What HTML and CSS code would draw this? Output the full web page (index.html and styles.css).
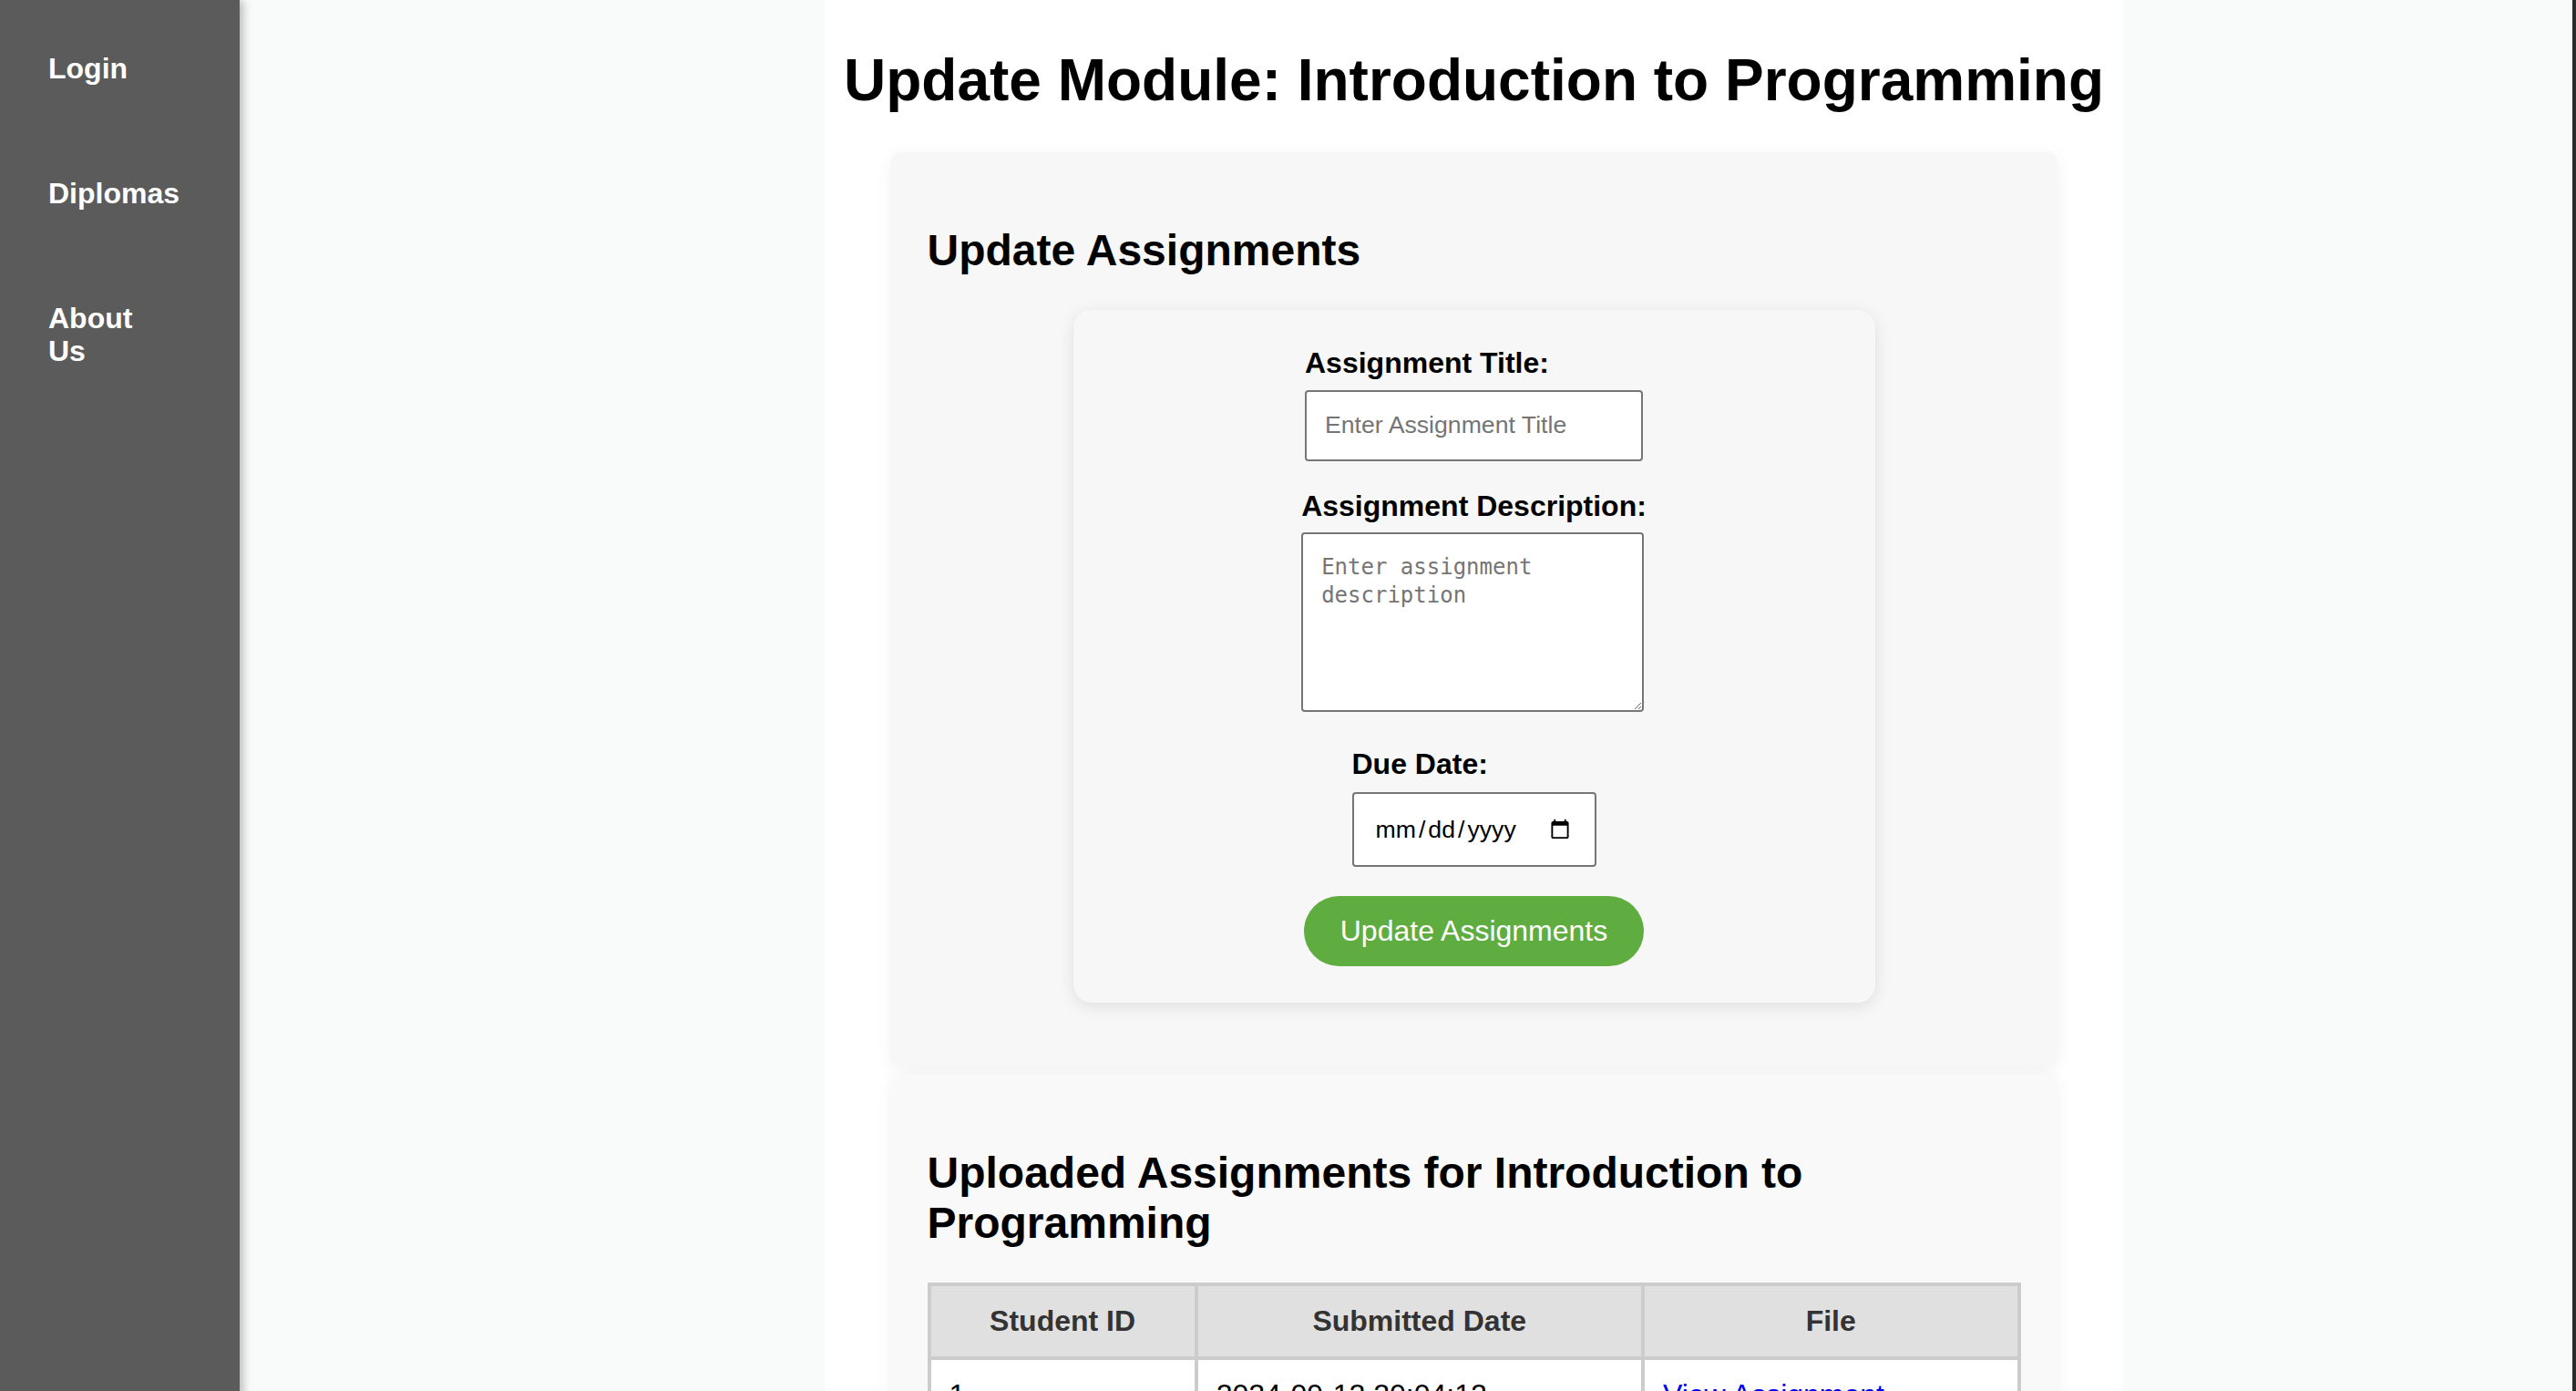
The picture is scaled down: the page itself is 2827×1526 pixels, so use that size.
FILE: index.html
```html
<!DOCTYPE html>
<html lang="en">
<head>
<meta charset="utf-8">
<title>Update Module: Introduction to Programming</title>
<link rel="stylesheet" href="styles.css">
</head>
<body>
  <nav class="sidebar">
    <a class="nav-link" href="#">Login</a>
    <a class="nav-link" href="#">Diplomas</a>
    <a class="nav-link" href="#">About Us</a>
  </nav>
  <main class="main">
    <div class="container">
      <h1 class="page-title">Update Module: Introduction to Programming</h1>

      <section class="card card-update">
        <h2 class="card-title">Update Assignments</h2>
        <form class="form-card">
          <div class="form-group">
            <label class="form-label" for="title">Assignment Title:</label>
            <input class="text-input" id="title" type="text" placeholder="Enter Assignment Title">
          </div>
          <div class="form-group form-group-desc">
            <label class="form-label" for="desc">Assignment Description:</label>
            <textarea class="text-area" id="desc" placeholder="Enter assignment description"></textarea>
          </div>
          <div class="form-group">
            <label class="form-label" for="due">Due Date:</label>
            <input class="date-input" id="due" type="date">
          </div>
          <button class="btn-submit" type="button">Update Assignments</button>
        </form>
      </section>

      <section class="card card-uploaded">
        <h2 class="card-title">Uploaded Assignments for Introduction to Programming</h2>
        <table class="uploads">
          <thead>
            <tr><th>Student ID</th><th>Submitted Date</th><th>File</th></tr>
          </thead>
          <tbody>
            <tr><td>1</td><td>2024-09-12 20:04:12</td><td><a class="file-link" href="#">View Assignment</a></td></tr>
            <tr><td>2</td><td>2024-09-13 10:15:47</td><td><a class="file-link" href="#">View Assignment</a></td></tr>
          </tbody>
        </table>
      </section>
    </div>
  </main>
  <div class="edge"></div>
</body>
</html>
```

FILE: styles.css
```css
* { box-sizing: border-box; }

html, body {
  margin: 0;
  padding: 0;
}

body {
  display: flex;
  min-height: 100vh;
  background: #f9fbfb;
  font-family: "Liberation Sans", Arial, sans-serif;
  color: #000;
}

/* Sidebar */
.sidebar {
  width: 263px;
  flex: 0 0 263px;
  background: #5b5b5b;
  padding-top: 7px;
  display: flex;
  flex-direction: column;
  align-items: flex-start;
  box-shadow: 3px 0 10px rgba(0, 0, 0, 0.3);
  position: relative;
  z-index: 2;
}

.nav-link {
  display: block;
  width: 100px;
  margin-left: 53px;
  padding: 50px 0;
  color: #fff;
  font-weight: bold;
  font-size: 32px;
  line-height: 36.8px;
  text-decoration: none;
  white-space: normal;
}

/* Main */
.main {
  flex: 1;
  display: flex;
  justify-content: center;
  padding-left: 149px;
}

.container {
  width: 1425px;
  background: #fff;
  min-height: 100vh;
  padding-bottom: 40px;
}

.page-title {
  margin: 52px 0 41px;
  text-align: center;
  font-size: 64px;
  line-height: 73.6px;
  font-weight: bold;
}

.card {
  width: 1280px;
  margin: 0 auto 9px;
  padding: 40px;
  border-radius: 10px;
  box-shadow: 0 4px 20px rgba(0, 0, 0, 0.06);
}

.card-update { background: #f7f7f7; }
.card-uploaded { background: #f9f9f9; }

.card-title {
  margin: 40px 0 38px;
  font-size: 48px;
  line-height: 55.2px;
  font-weight: bold;
}

/* Form card */
.form-card {
  width: 880px;
  margin: 0 auto 30px;
  padding: 40px;
  background: #f7f7f7;
  border-radius: 20px;
  box-shadow: 0 4px 18px rgba(0, 0, 0, 0.1);
  display: flex;
  flex-direction: column;
  align-items: center;
}

.form-group {
  display: flex;
  flex-direction: column;
  align-items: flex-start;
  margin-bottom: 31px;
}

.form-group-desc { margin-bottom: 39px; }

.form-label {
  font-size: 32px;
  line-height: 36.8px;
  font-weight: bold;
  margin-bottom: 11px;
}

.text-input {
  width: 371px;
  height: 78px;
  padding: 0 20px;
  border: 2px solid #767676;
  border-radius: 4px;
  background: #fff;
  font-family: "Liberation Sans", Arial, sans-serif;
  font-size: 26.67px;
  color: #000;
}

.text-input::placeholder { color: #757575; }

.text-area {
  display: block;
  width: 376px;
  height: 197px;
  padding: 21px 20px 20px;
  border: 2px solid #767676;
  border-radius: 4px;
  background: #fff;
  font-family: "DejaVu Sans Mono", "Liberation Mono", monospace;
  font-size: 24px;
  line-height: 31px;
  color: #000;
}

.text-area::placeholder { color: #757575; }

.date-input {
  width: 268px;
  height: 82px;
  padding: 0 26px 0 23px;
  margin-top: 1px;
  border: 2px solid #767676;
  border-radius: 4px;
  background: #fff;
  font-family: "Liberation Sans", Arial, sans-serif;
  font-size: 26.67px;
  color: #000;
}

.date-input::-webkit-datetime-edit-text {
  padding: 0 2px;
}

.date-input::-webkit-calendar-picker-indicator {
  width: 24px;
  height: 24px;
  padding: 0;
  margin: 0;
}

.btn-submit {
  padding: 20px 40px;
  margin-top: 1px;
  border: none;
  border-radius: 40px;
  background: #5fad41;
  color: #fff;
  font-family: "Liberation Sans", Arial, sans-serif;
  font-size: 32px;
  line-height: 36.8px;
  cursor: pointer;
}

/* Table */
.uploads {
  width: 100%;
  border-collapse: collapse;
  font-size: 32px;
  line-height: 36.8px;
}

.uploads th,
.uploads td {
  border: 4px solid #ccc;
  padding: 20px;
}

.uploads th {
  background: #e0e0e0;
  color: #333;
  font-weight: bold;
  text-align: center;
}

.uploads td {
  background: #fff;
  text-align: left;
}

.file-link { color: #0000ee; }

.edge {
  flex: 0 0 4px;
  background: #2b2b2b;
}
```
